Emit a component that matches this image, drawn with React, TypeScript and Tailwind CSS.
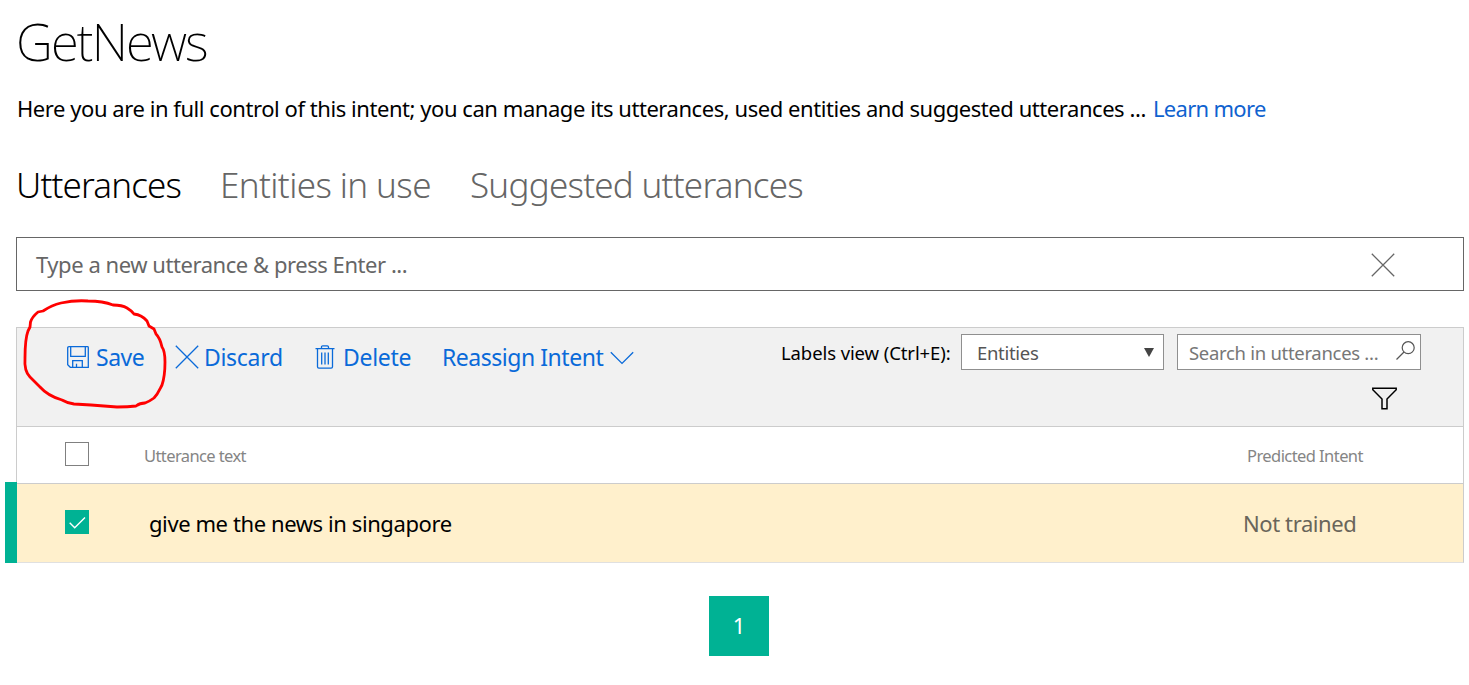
import React from "react";

const tabs = [
  { label: "Utterances", style: "text-black mr-[39px] w-[165px] tracking-[-0.85px]" },
  { label: "Entities in use", style: "text-[#666] mr-[40px] w-[210px] tracking-[-0.6px]" },
  { label: "Suggested utterances", style: "text-[#666] tracking-[-0.75px]" },
];

function SaveIcon() {
  return (
    <svg className="mb-px block h-[22px] w-[22px]" viewBox="0 0 22 22" fill="none" stroke="currentColor" strokeWidth="1.3">
      <path d="M2 .7h18.500q.8 0 .8.8v19.800H3.300L.7 18.700V2Q.7.7 2 .7zM3.700.7v9.600h14.600V.7M5.700 21.300v-6.600h9.600v6.600M9.500 21.300v-3.600" />
    </svg>
  );
}

function CrossIcon({ className }: { className: string }) {
  return (
    <svg className={className} viewBox="0 0 24 24" fill="none" stroke="currentColor" strokeWidth="1.300">
      <path d="M.8.8l22.400 22.400M23.200.8L.8 23.200" />
    </svg>
  );
}

function TrashIcon() {
  return (
    <svg className="mb-px block h-6 w-5" viewBox="0 0 20 24" fill="none" stroke="currentColor" strokeWidth="1.300">
      <path d="M.5 3.700h19M6.500 3.500V2q0-1.200 1.200-1.200h4.600q1.200 0 1.200 1.200v1.500M2.500 3.700v18q0 1.400 1.400 1.400h12.200q1.400 0 1.400-1.400v-18M6.700 7.500v12M10 7.500v12M13.300 7.500v12" />
    </svg>
  );
}

export default function App() {
  return (
    <div className="relative flex h-[685px] w-[1469px] flex-col overflow-hidden bg-white pl-4 pr-[5px] font-['Noto_Sans',sans-serif] text-black">
      <h1 className="flex h-20 items-center pt-[3px] text-[51px] font-[200] leading-none tracking-[-1.9px] whitespace-nowrap">GetNews</h1>
      <p className="flex h-[57px] items-center pl-px text-[22px] whitespace-nowrap">
        <span className="w-[1136px] tracking-[-0.445px]">
          Here you are in full control of this intent; you can manage its utterances, used entities and suggested utterances ...
        </span>
        <a className="tracking-[-0.7px] text-[#0f62cf]">Learn more</a>
      </p>
      <nav className="flex h-[94px] items-center pt-[3px] text-[35px] font-light whitespace-nowrap">
        {tabs.map((t) => (
          <span key={t.label} className={t.style}>{t.label}</span>
        ))}
      </nav>

      <div className="mt-[6px] flex h-[54px] shrink-0 items-center justify-between border border-[#666] pl-[19px] pr-[68px] text-[#666]">
        <span className="text-[22px] tracking-[-0.45px]">Type a new utterance &amp; press Enter ...</span>
        <CrossIcon className="mt-[2px] block h-6 w-6" />
      </div>

      <section className="mt-9 flex h-[236px] shrink-0 flex-col border border-[#ccc] border-b-[#e0e0e0]">
        <div className="flex h-[99px] shrink-0 border-b border-[#ccc] bg-[#f1f1f1]">
          <div className="flex h-[59px] items-center pl-[50px] text-[23px] tracking-[-0.3px] whitespace-nowrap text-[#0a6ad9]">
            <SaveIcon />
            <span className="ml-[7px] w-[79px] tracking-[-0.5px]">Save</span>
            <CrossIcon className="mb-[2px] block h-6 w-6" />
            <span className="ml-[5px] w-[111px]">Discard</span>
            <TrashIcon />
            <span className="ml-[8px] w-[99px]">Delete</span>
            <span className="w-[168px] tracking-[-0.47px]">Reassign Intent</span>
            <svg className="block h-[14px] w-6" viewBox="0 0 24 14" fill="none" stroke="currentColor" strokeWidth="1.300">
              <path d="M.8 1.200L12 12.400 23.200 1.200" />
            </svg>
          </div>
          <div className="mr-[42px] ml-auto flex flex-col items-end">
            <div className="mt-[6px] flex h-9 items-center whitespace-nowrap">
              <span className="w-[180px] pt-[2px] text-[18.500px] tracking-[-0.1px]">Labels view (Ctrl+E):</span>
              <div className="mr-[13px] flex h-9 w-[203px] items-center justify-between border border-[#8f8f8f] bg-white pr-[9px] pl-[15px] text-[18.500px] tracking-[-0.3px] text-[#555]">
                <span className="pt-[2px]">Entities</span>
                <svg className="block h-[9px] w-[10px]" viewBox="0 0 10 9" fill="#444"><path d="M0 0h10L5 9z" /></svg>
              </div>
              <div className="flex h-9 w-[244px] items-center justify-between border border-[#8f8f8f] bg-white pr-[5px] pl-[11px] text-[18.500px] tracking-[-0.3px] text-[#777]">
                <span className="pt-[2px]">Search in utterances ...</span>
                <svg className="mb-1 block h-[19px] w-[19px]" viewBox="0 0 19 19" fill="none" stroke="#555" strokeWidth="1.200">
                  <circle cx="12.200" cy="6.700" r="6" /><path d="M8 11L.5 18.500" />
                </svg>
              </div>
            </div>
            <svg className="mt-[17px] mr-6 block h-[23px] w-[25px]" viewBox="0 0 25 23" fill="none" stroke="#000" strokeWidth="1.500">
              <path d="M.8 1.200h23.400v1.600L15 12v9.800h-5V12L.8 2.800z" />
            </svg>
          </div>
        </div>

        <div className="flex h-[57px] shrink-0 items-center border-b border-[#ccc] pl-12 text-[16.500px] text-[#858585]">
          <span className="mb-[3px] h-6 w-6 border border-[#808080] bg-white" />
          <span className="ml-[55px] pt-[2px] tracking-[-0.6px]">Utterance text</span>
          <span className="ml-auto w-[216px] pt-[2px] tracking-[-0.57px]">Predicted Intent</span>
        </div>

        <div className="flex h-[78px] shrink-0 items-center bg-[#fff0cc] pl-12 text-[22px]">
          <span className="mb-[2px] flex h-6 w-6 items-center justify-center bg-[#00b294]">
            <svg className="block h-6 w-6" viewBox="0 0 24 24" fill="none" stroke="#fff" strokeWidth="1.400">
              <path d="M4.700 12.700l5 5L20 7.600" />
            </svg>
          </span>
          <span className="ml-[60px] tracking-[-0.41px]">give me the news in singapore</span>
          <span className="ml-auto w-[220px] tracking-[-0.4px] text-[#69655a]">Not trained</span>
        </div>
      </section>

      <div className="mt-[33px] ml-[693px] flex h-[60px] w-[60px] items-center justify-center bg-[#00b294] pb-[2px] text-[22px] text-white">1</div>

      <span className="absolute top-[482px] left-[5px] h-[81px] w-3 bg-[#00b294]" />
      <svg className="absolute top-[290px] left-0 h-[130px] w-[180px]" viewBox="0 0 180 130" fill="none" stroke="#f00" strokeWidth="2.800" strokeLinejoin="round">
        <path d="M30 37L30.500 32Q32 27 38 22L43 21Q52 15 61 13Q75 10 88 11Q103 11 113 15Q122 15 127 18Q132 21 134 24Q142 25 147 31L149 36L154 39L156 44Q160 48 162 57Q165 61 165 72Q165 86 162 95C159 101 158 104 154 108Q150 111 145 113Q140 113 136 116Q128 117 117 117L91 115L74 114Q67 113 62 110Q48 106 40 97L30 87Q24 81 25 68Q25 49 28 41Z" />
      </svg>
    </div>
  );
}
